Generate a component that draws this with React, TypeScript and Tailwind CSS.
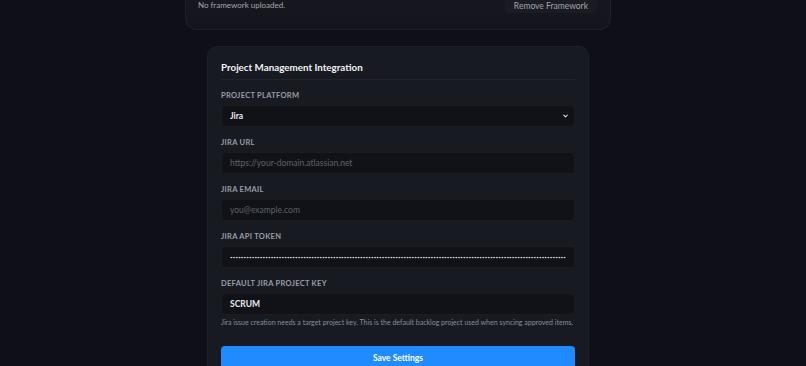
import React from "react";

const font = { fontFamily: "Lato, 'Noto Sans', sans-serif" };

function Field({ label, children }: { label: string; children: React.ReactNode }) {
  return (
    <div className="flex flex-col gap-[4px]">
      <label className="block text-[7.5px] font-bold tracking-[0.04em] uppercase text-[#9a9ca8] leading-[10px]">
        {label}
      </label>
      {children}
    </div>
  );
}

const baseCls =
  "block w-full h-[22px] rounded-[4px] bg-[#111218] border border-[#1a1c23] px-[8px] leading-[20px] placeholder:text-[#5d606b] outline-none";
const inputCls = baseCls + " text-[8.5px] text-[#e7e8ec]";

export default function App() {
  return (
    <div
      className="h-[366px] w-full overflow-hidden bg-[#0e0f18] flex flex-col items-center pr-[10px]"
      style={font}
    >
      {/* Framework card (scrolled) */}
      <div className="shrink-0 w-[426px] h-[31px] -mt-[1px] rounded-b-[12px] bg-gradient-to-b from-[#17181f] to-[#14151c] border border-t-0 border-[#1f2129] flex items-start justify-between pl-[12px] pr-[13px]">
        <span className="text-[8px] leading-[12px] text-[#a3a5ae]">No framework uploaded.</span>
        <div className="h-[14px] px-[9px] rounded-b-[4px] bg-[#1b1c23] text-[8.5px] text-[#a0a2ab] flex items-center">
          Remove Framework
        </div>
      </div>

      {/* Project management card */}
      <div className="shrink-0 mt-[16px] w-[382px] rounded-[10px] bg-[#181a22] border border-[#1e2028] px-[13px] pt-[13px] pb-[20px] flex flex-col">
        <h2 className="text-[9.8px] font-bold text-[#f1f2f5] leading-[14px]">
          Project Management Integration
        </h2>
        <div className="mt-[5px] h-px bg-[#22242c]" />

        <div className="mt-[11px] flex flex-col gap-[11px]">
          <Field label="Project Platform">
            <div className="relative">
              <select className={inputCls + " appearance-none font-bold"} defaultValue="jira">
                <option value="jira">Jira</option>
              </select>
              <svg
                className="absolute right-[6px] top-1/2 -translate-y-1/2 w-[7px] h-[7px] text-[#e2e3e8]"
                viewBox="0 0 24 24"
                fill="none"
                stroke="currentColor"
                strokeWidth="3.5"
                strokeLinecap="round"
                strokeLinejoin="round"
              >
                <path d="m6 9 6 6 6-6" />
              </svg>
            </div>
          </Field>

          <Field label="Jira URL">
            <input className={inputCls} placeholder="https://your-domain.atlassian.net" />
          </Field>

          <Field label="Jira Email">
            <input className={inputCls} placeholder="you@example.com" />
          </Field>

          <Field label="Jira API Token">
            <input
              type="password"
              className={baseCls + " text-[4.5px] tracking-[0.1px] text-[#dcdde2]"}
              defaultValue={"x".repeat(240)}
            />
          </Field>

          <div className="flex flex-col">
            <Field label="Default Jira Project Key">
              <input className={inputCls + " font-bold"} defaultValue="SCRUM" />
            </Field>
            <p className="mt-[2px] text-[7px] text-[#8a8c96] leading-[10px]">
              Jira issue creation needs a target project key. This is the default backlog project used when syncing approved items.
            </p>
          </div>
        </div>

        <button className="mt-[19px] h-[24px] w-full rounded-[4px] bg-[#1f8bff] text-[8.5px] font-bold text-white">
          Save Settings
        </button>
      </div>
    </div>
  );
}
